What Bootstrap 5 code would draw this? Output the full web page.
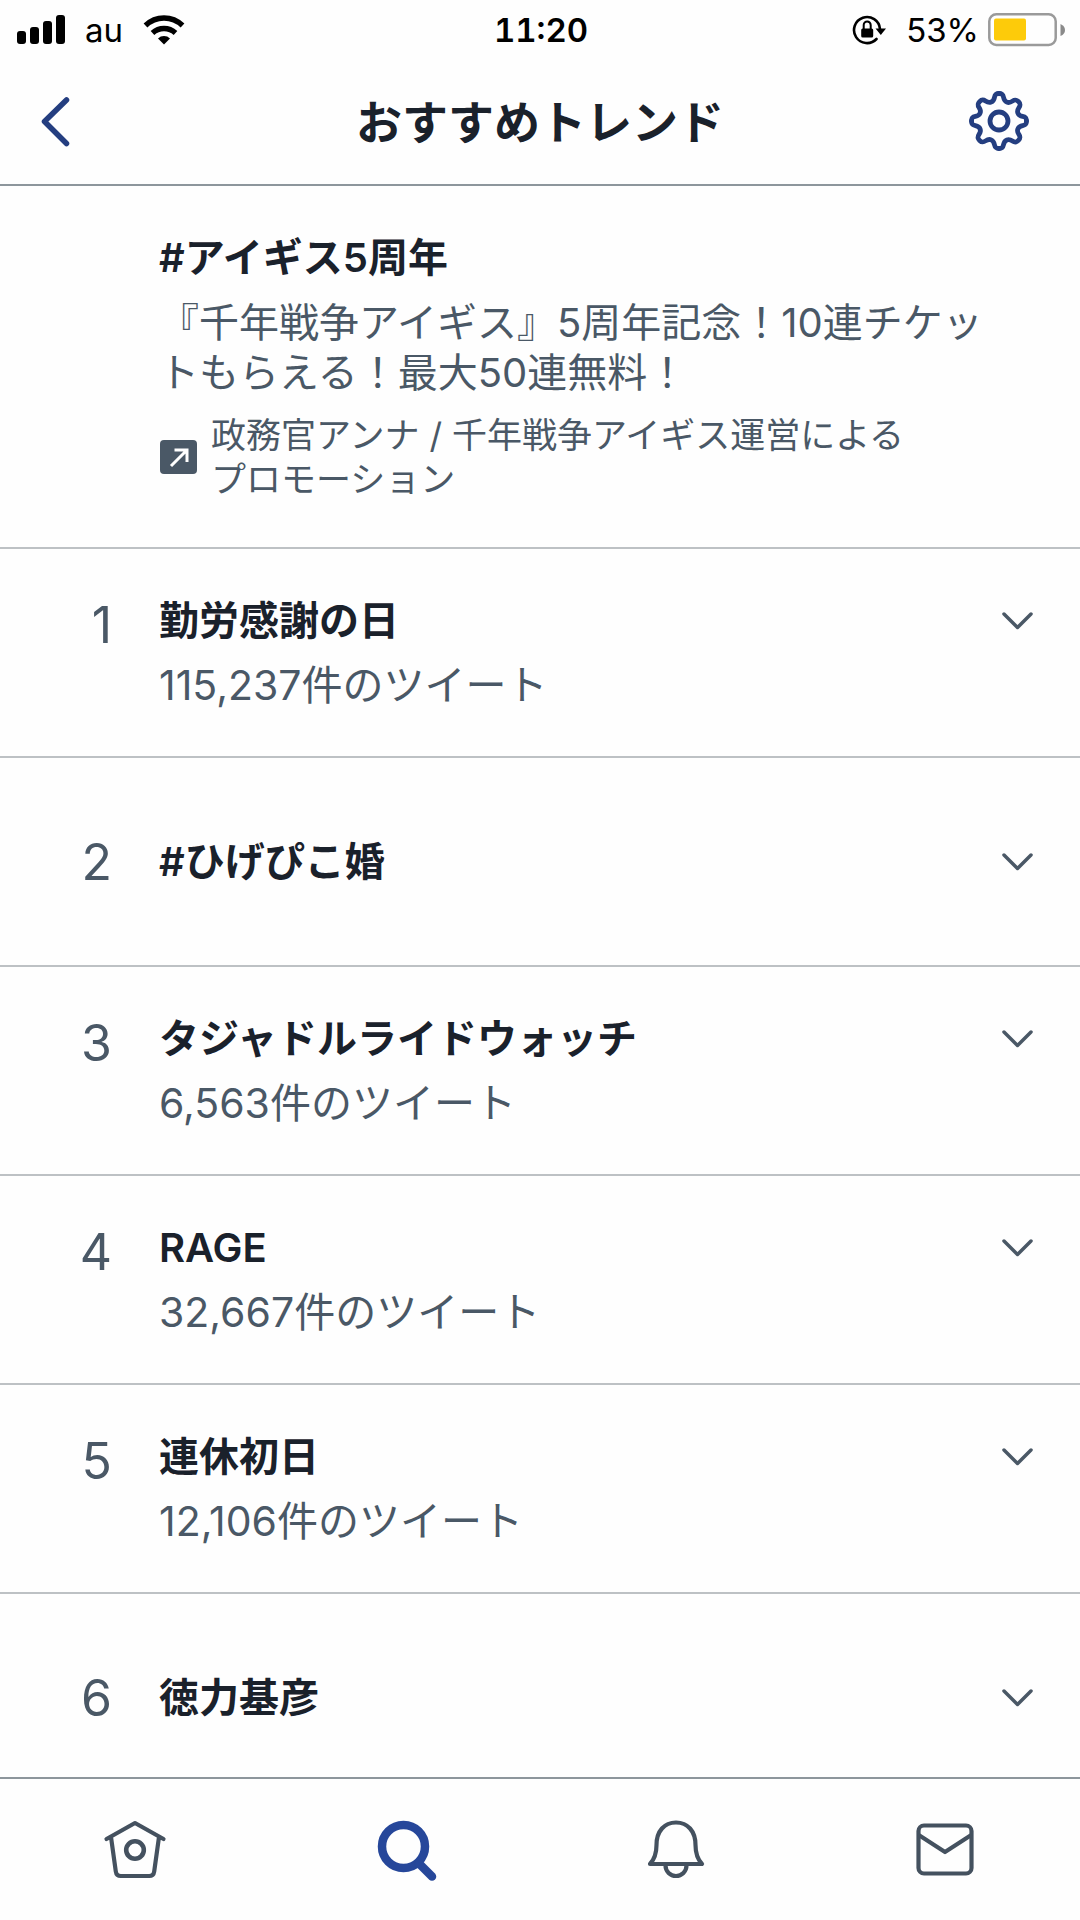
<!DOCTYPE html>
<html lang="ja">
<head>
<meta charset="utf-8">
<meta name="viewport" content="width=device-width, initial-scale=1">
<title>おすすめトレンド</title>
<link href="https://cdn.jsdelivr.net/npm/bootstrap@5.3.0/dist/css/bootstrap.min.css" rel="stylesheet">
<style>
  body { font-family: Inter, "Noto Sans CJK JP", sans-serif; color: #1a212b; background: #fefefe; }
  .icon-btn { background: none; border: 0; padding: 0; }
  .ink-soft { color: #4a5866; }
  .ink-blue { color: #243e80; }
  svg { display: block; fill: none; stroke: currentColor; stroke-linecap: round; stroke-linejoin: round; }
  svg .solid { fill: currentColor; stroke: none; }

  .status { height: 60px; padding: 0 14px 0 16px; font-size: 33px; line-height: 60px; color: #000; }
  .status-side { flex: 1 1 0; }
  .clock { font-variant-numeric: tabular-nums; }
  .carrier { margin: 0 20px 0 19px; }
  .charge { margin: 0 9px 0 18px; }

  .title-bar { height: 126px; padding: 0 40px; border-bottom: 2px solid #8d969c; }
  .title-bar h1 { font-size: 46px; line-height: 64px; font-weight: 600; margin: 0; }

  .promo, .trend { border-bottom: 2px solid #bdc1c4; padding: 40px 46px 39px 0; }
  .promo { padding: 40px 60px 46px 159px; }
  .topic { font-size: 40px; line-height: 64px; font-weight: 600; margin: 0; }
  .blurb { font-size: 40px; line-height: 50px; margin: 8px 0 15px; }
  .sponsor { font-size: 35px; line-height: 44px; gap: 14px; }
  .rank { width: 112px; margin-right: 47px; font-size: 50px; line-height: 72px; text-align: right; }
  .tweets { font-size: 41px; line-height: 64px; margin: 0; }
  .trend { min-height: 209px; }
  .more { height: 64px; }

  .tabs { height: 143px; border-top: 2px solid #8d969c; color: #44515f; }
  .tabs a { flex: 1 1 0; color: inherit; }
  .tabs a.current { color: #26479a; }
</style>
</head>
<body>
<div class="d-flex flex-column vh-100 overflow-hidden">
  <div class="status d-flex align-items-center flex-shrink-0">
    <div class="status-side d-flex align-items-center">
      <svg width="50" height="30" viewBox="0 0 50 30" aria-hidden="true"><g class="solid"><rect x="1" y="16" width="9" height="13" rx="3"/><rect x="14" y="12" width="9" height="17" rx="3"/><rect x="27" y="6" width="9" height="23" rx="3"/><rect x="40" y="0" width="9" height="29" rx="3"/></g></svg>
      <span class="carrier">au</span>
      <svg width="42" height="30" viewBox="0 0 42 30" stroke-width="5.4" aria-label="Wi-Fi"><g stroke-linecap="butt"><path d="M2.500 10.500a26.500 26.500 0 0 1 37 0"/><path d="M9.500 18a17 17 0 0 1 23 0"/></g><path class="solid" d="M21 29.500l-6-6a8.500 8.500 0 0 1 12 0z"/></svg>
    </div>
    <div class="clock fw-semibold">11:20</div>
    <div class="status-side d-flex align-items-center justify-content-end">
      <svg width="36" height="32" viewBox="0 0 36 32" stroke-width="2.600" aria-label="画面の向きをロック"><path d="M28 15A13 13 0 1 0 24.500 25" /><path class="solid" d="M23.500 14.500h10.500l-5.200 6.500z"/><rect class="solid" x="9.200" y="14.500" width="12" height="9" rx="1.500"/><path d="M11.700 15v-4a3.500 3.500 0 0 1 7 0v4" stroke-width="2"/></svg>
      <span class="charge">53%</span>
      <svg width="78" height="34" viewBox="0 0 78 34" aria-label="バッテリー"><rect x="1.300" y="1.300" width="66.400" height="30.600" rx="7" stroke="#9a9a9a" stroke-width="2.500"/><rect x="6" y="5.500" width="32" height="22" rx="2" fill="#fdcb0a" stroke="none"/><path d="M72.500 11q4.500 2 4.500 6t-4.500 6z" fill="#8a8a8a" stroke="none"/></svg>
    </div>
  </div>

  <header class="title-bar d-flex align-items-center justify-content-between flex-shrink-0">
    <button type="button" class="icon-btn ink-blue" aria-label="戻る"><svg width="82" height="70" viewBox="0 0 82 70" stroke-width="5.500"><path d="M26.500 13L4.500 34.500l22 22"/></svg></button>
    <h1>おすすめトレンド</h1>
    <button type="button" class="icon-btn ink-blue" aria-label="設定"><svg width="82" height="70" viewBox="-41 -34 82 70" stroke-width="4.800">
      <path id="teeth" d="M0-27.500C7-27.500 2.300-21.200 7.850-18.900S14.300-24.300 19.400-19.400 16.700-13.400 18.900-7.850 27.500-7 27.500 0"/>
      <use href="#teeth" transform="rotate(90)"/><use href="#teeth" transform="rotate(180)"/><use href="#teeth" transform="rotate(270)"/>
      <circle r="9"/></svg></button>
  </header>

  <main class="flex-grow-1 overflow-hidden">
    <section class="promo">
      <h2 class="topic">#アイギス5周年</h2>
      <p class="blurb ink-soft">『千年戦争アイギス』5周年記念！10連チケットもらえる！最大50連無料！</p>
      <div class="sponsor ink-soft d-flex align-items-center">
        <svg width="38" height="34" viewBox="0 0 38 34" class="flex-shrink-0" aria-hidden="true"><rect class="solid" x="1" width="37" height="34" rx="4"/><path d="M12 26L27.500 10.500M15.500 10h12.500v12" stroke="#fff" stroke-width="3" stroke-linecap="butt" stroke-linejoin="miter"/></svg>
        <div>政務官アンナ / 千年戦争アイギス運営による<br>プロモーション</div>
      </div>
    </section>
    <ol class="list-unstyled m-0">
      <li class="trend d-flex align-items-start">
        <div class="rank ink-soft">1</div>
        <div class="flex-grow-1"><h2 class="topic">勤労感謝の日</h2><p class="tweets ink-soft">115,237件のツイート</p></div>
        <button type="button" class="icon-btn more ink-soft" aria-label="その他"><svg width="34" height="64" viewBox="0 0 34 64" stroke-width="3.500"><path d="M4 25l13.500 13.500L31 25"/></svg></button>
      </li>
      <li class="trend d-flex align-items-center">
        <div class="rank ink-soft">2</div>
        <div class="flex-grow-1"><h2 class="topic">#ひげぴこ婚</h2></div>
        <button type="button" class="icon-btn more ink-soft" aria-label="その他"><svg width="34" height="64" viewBox="0 0 34 64" stroke-width="3.500"><path d="M4 25l13.500 13.500L31 25"/></svg></button>
      </li>
      <li class="trend d-flex align-items-start">
        <div class="rank ink-soft">3</div>
        <div class="flex-grow-1"><h2 class="topic">タジャドルライドウォッチ</h2><p class="tweets ink-soft">6,563件のツイート</p></div>
        <button type="button" class="icon-btn more ink-soft" aria-label="その他"><svg width="34" height="64" viewBox="0 0 34 64" stroke-width="3.500"><path d="M4 25l13.500 13.500L31 25"/></svg></button>
      </li>
      <li class="trend d-flex align-items-start">
        <div class="rank ink-soft">4</div>
        <div class="flex-grow-1"><h2 class="topic">RAGE</h2><p class="tweets ink-soft">32,667件のツイート</p></div>
        <button type="button" class="icon-btn more ink-soft" aria-label="その他"><svg width="34" height="64" viewBox="0 0 34 64" stroke-width="3.500"><path d="M4 25l13.500 13.500L31 25"/></svg></button>
      </li>
      <li class="trend d-flex align-items-start">
        <div class="rank ink-soft">5</div>
        <div class="flex-grow-1"><h2 class="topic">連休初日</h2><p class="tweets ink-soft">12,106件のツイート</p></div>
        <button type="button" class="icon-btn more ink-soft" aria-label="その他"><svg width="34" height="64" viewBox="0 0 34 64" stroke-width="3.500"><path d="M4 25l13.500 13.500L31 25"/></svg></button>
      </li>
      <li class="trend d-flex align-items-center">
        <div class="rank ink-soft">6</div>
        <div class="flex-grow-1"><h2 class="topic">徳力基彦</h2></div>
        <button type="button" class="icon-btn more ink-soft" aria-label="その他"><svg width="34" height="64" viewBox="0 0 34 64" stroke-width="3.500"><path d="M4 25l13.500 13.500L31 25"/></svg></button>
      </li>
    </ol>
  </main>

  <nav class="tabs d-flex flex-shrink-0" aria-label="メイン">
    <a href="#home" class="d-flex align-items-center justify-content-center" aria-label="ホーム"><svg width="64" height="64" viewBox="-32 -32 64 64" stroke-width="4.200"><path d="M-28.500-11L0-27 28.500-11M-24-13l4.800 34.500q.6 4.500 5 4.500h28.400q4.400 0 5-4.500L24-13"/><circle r="8.800" stroke-width="4.600"/></svg></a>
    <a href="#search" class="current d-flex align-items-center justify-content-center" aria-label="検索"><svg width="64" height="64" viewBox="-32 -32 64 64" stroke-width="8.500"><circle cx="-1.500" cy="-3.500" r="21.500"/><path d="M14 13.500L27 26.500"/></svg></a>
    <a href="#notifications" class="d-flex align-items-center justify-content-center" aria-label="通知"><svg width="64" height="64" viewBox="-33 -32 64 64" stroke-width="4.200"><path d="M-26 14Q-19.500 7-19.500-5C-19.500-19-11.500-27.500 0-27.500S19.500-19 19.500-5Q19.500 7 26 14zM-10.500 15.500a10.500 10.500 0 0 0 21 0"/></svg></a>
    <a href="#messages" class="d-flex align-items-center justify-content-center" aria-label="メッセージ"><svg width="64" height="64" viewBox="-32 -32 64 64" stroke-width="4.200"><rect x="-26.500" y="-24.500" width="53" height="48" rx="5.500"/><path d="M-25.500-14.500L0 2 25.500-14.500"/></svg></a>
  </nav>
</div>
<script src="https://cdn.jsdelivr.net/npm/bootstrap@5.3.0/dist/js/bootstrap.bundle.min.js"></script>
</body>
</html>
